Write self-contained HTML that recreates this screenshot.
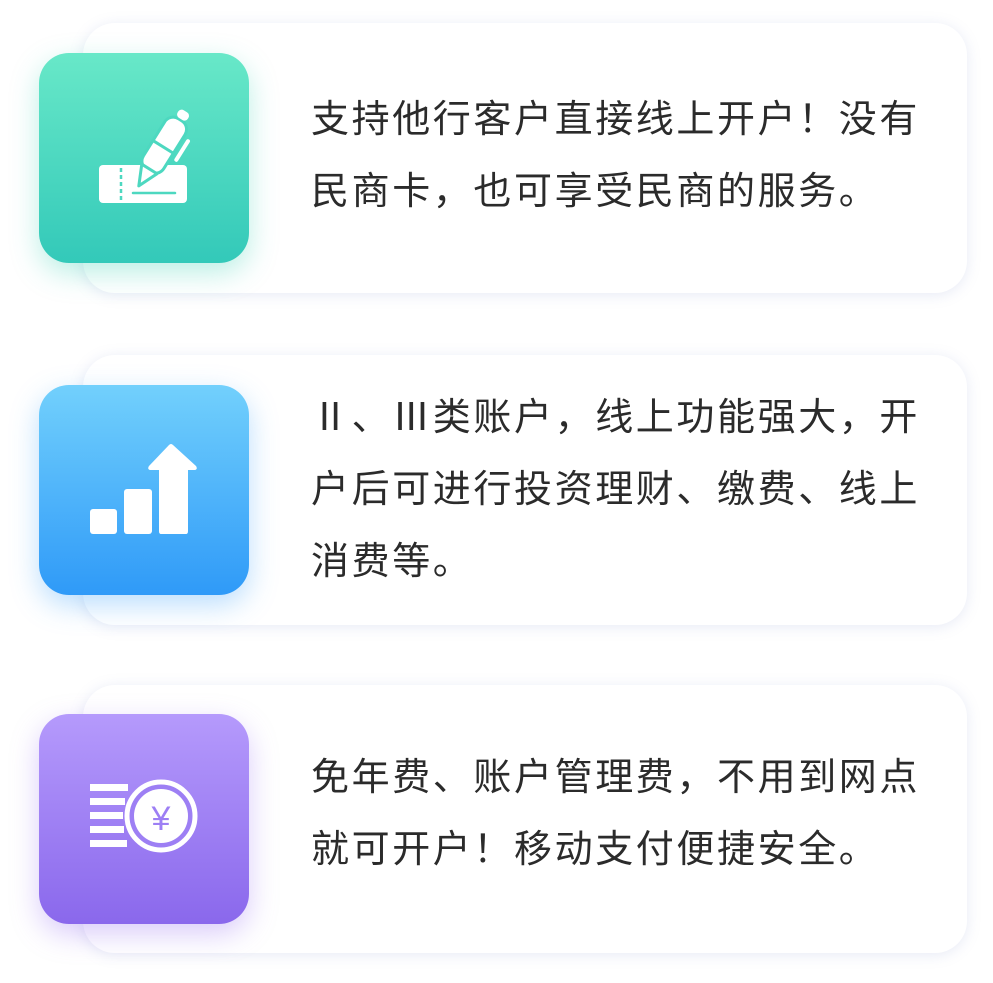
<!DOCTYPE html>
<html><head><meta charset="utf-8"><style>
html,body{margin:0;padding:0;background:#fff;width:993px;height:983px;overflow:hidden;position:relative;font-family:"Liberation Sans","Noto Sans CJK SC",sans-serif}
.card{position:absolute;left:83px;width:884px;height:270px;background:#fff;border-radius:32px;box-shadow:0 2px 14px rgba(120,140,200,0.18)}
.ic{position:absolute;left:39px;width:210px;height:210px;border-radius:30px}
.ic svg{position:absolute;left:0;top:0}
.t{position:absolute;left:311px;font-size:38px;letter-spacing:2.6px;line-height:72px;color:#2b2b2b;white-space:nowrap}
</style></head><body>
<div class="card" style="top:23px"></div>
<div class="card" style="top:355px"></div>
<div class="card" style="top:685px;height:268px"></div>

<div class="ic" style="top:53px;background:linear-gradient(#68e8c8,#33c9b9);box-shadow:0 10px 28px rgba(60,210,180,0.35)">
<svg width="210" height="210" viewBox="39 53 210 210">
<rect x="99" y="165" width="88" height="38" rx="4" fill="#fff"/>
<line x1="121" y1="168" x2="121" y2="201" stroke="#4dd8c0" stroke-width="2.5" stroke-dasharray="4 3"/>
<line x1="133" y1="193" x2="175" y2="193" stroke="#4dd8c0" stroke-width="2.5" stroke-linecap="round"/>
<g transform="rotate(32 160 152)">
<rect x="148" y="114" width="24" height="60" rx="10" fill="#fff" stroke="#4dd8c0" stroke-width="3"/>
<line x1="148" y1="146" x2="172" y2="146" stroke="#4dd8c0" stroke-width="3"/>
<path d="M151 172 L160 192 L169 172Z" fill="#fff" stroke="#4dd8c0" stroke-width="3" stroke-linejoin="round"/>
<rect x="154" y="104" width="12" height="9" rx="4" fill="#fff"/>
<rect x="176" y="126" width="4" height="26" rx="2" fill="#fff"/>
</g>
</svg></div>

<div class="ic" style="top:385px;background:linear-gradient(#72d0fc,#2f9af8);box-shadow:0 10px 28px rgba(60,160,250,0.35)">
<svg width="210" height="210" viewBox="39 385 210 210">
<rect x="90" y="509" width="27" height="25" rx="3" fill="#fff"/>
<rect x="124" y="489" width="28" height="45" rx="3" fill="#fff"/>
<path d="M161 534 H186 Q188 534 188 531 V470 H195 Q198 469 196 466 L173 445 Q171 443 169 445 L149 466 Q147 469 150 470 H159 V531 Q159 534 161 534Z" fill="#fff"/>
</svg></div>

<div class="ic" style="top:714px;background:linear-gradient(#b59afc,#8a68ec);box-shadow:0 10px 28px rgba(150,110,240,0.35)">
<svg width="210" height="210" viewBox="39 714 210 210">
<g fill="#fff"><rect x="90" y="784" width="38" height="7"/><rect x="90" y="798" width="35" height="7"/><rect x="90" y="812" width="33" height="7"/><rect x="90" y="826" width="34" height="7"/><rect x="90" y="840" width="37" height="7"/></g>
<circle cx="161" cy="816" r="34" fill="#9d7ff4" stroke="#fff" stroke-width="5"/>
<circle cx="161" cy="816" r="27" fill="#fff"/>
<text x="161" y="830" text-anchor="middle" font-size="34" fill="#9d7ff4" font-family="Liberation Sans,sans-serif">¥</text>
</svg></div>

<div class="t" style="top:84px">支持他行客户直接线上开户！没有<br>民商卡，也可享受民商的服务。</div>
<div class="t" style="top:382px">Ⅱ、Ⅲ类账户，线上功能强大，开<br>户后可进行投资理财、缴费、线上<br>消费等。</div>
<div class="t" style="top:742px">免年费、账户管理费，不用到网点<br>就可开户！移动支付便捷安全。</div>
</body></html>
